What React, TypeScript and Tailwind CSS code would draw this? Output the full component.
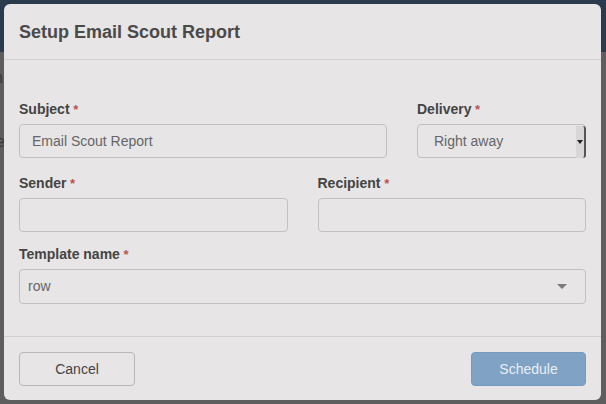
import React from "react";

const Req = () => <span className="text-[13px] text-[#b9534f]"> *</span>;

const Label = ({ children }: { children: React.ReactNode }) => (
  <label className="mb-[5px] block h-5 text-[14px] font-bold leading-5 text-[#444]">
    {children}
    <Req />
  </label>
);

const inputBox =
  "h-[34px] w-full rounded-[4px] border border-[#c2c0c1] bg-[#e7e5e6] text-[14px] text-[#666]";

export default function App() {
  return (
    <div
      className="relative h-[404px] w-[606px] overflow-hidden bg-[#5e5e5e]"
      style={{ fontFamily: '"Liberation Sans", Arial, sans-serif' }}
    >
      {/* dimmed page behind the dialog */}
      <div className="h-[52px] bg-[#2c3a4d]" />
      <div className="flex flex-col gap-[40px] pl-0 pt-[14px] text-[16px] text-[#3a3a3a]">
        <span className="-ml-[6px]">n</span>
        <span className="-ml-[4px]">e</span>
      </div>

      {/* dialog */}
      <div className="absolute left-[4px] top-[4px] flex h-[396px] w-[597px] flex-col rounded-[6px] bg-[#e7e5e6]">
        <div className="flex h-[56px] items-center border-b border-[#d2d0d1] px-[15px] pt-[2px]">
          <h4 className="text-[18px] font-bold text-[#4a4a4a]">
            Setup Email Scout Report
          </h4>
        </div>

        <div className="flex-1 px-[15px] pt-[39px]">
          <div className="flex gap-[30px]">
            <div className="w-[368px]">
              <Label>Subject</Label>
              <div className={`${inputBox} flex items-center px-[12px]`}>
                Email Scout Report
              </div>
            </div>
            <div className="flex-1">
              <Label>Delivery</Label>
              <div className={`${inputBox} relative flex items-center px-[16px]`}>
                Right away
                <div className="absolute right-[-1px] top-[1px] flex h-[32px] w-[10px] items-center justify-center rounded-r-[3px] border-r-[2px] border-[#555] bg-[#d8d6d7]">
                  <div className="h-0 w-0 border-x-[3px] border-t-[4px] border-x-transparent border-t-[#222]" />
                </div>
              </div>
            </div>
          </div>

          <div className="mt-[15px] flex gap-[30px]">
            <div className="flex-1">
              <Label>Sender</Label>
              <div className={inputBox} />
            </div>
            <div className="flex-1">
              <Label>Recipient</Label>
              <div className={inputBox} />
            </div>
          </div>

          <div className="mt-[12px]">
            <Label>Template name</Label>
            <div className={`${inputBox} flex h-[35px] items-center justify-between pl-[8px] pr-[18px] text-[#444]`}>
              row
              <div className="h-0 w-0 border-x-[5px] border-t-[5px] border-x-transparent border-t-[#7a7a7a]" />
            </div>
          </div>
        </div>

        <div className="flex h-[64px] items-start justify-between border-t border-[#d2d0d1] px-[15px] pt-[15px]">
          <button className="h-[34px] w-[116px] rounded-[4px] border border-[#b8b6b7] text-[14px] text-[#444]">
            Cancel
          </button>
          <button className="h-[34px] w-[115px] rounded-[4px] border border-[#759bbf] bg-[#7fa2c5] text-[14px] text-[#e9eef4]">
            Schedule
          </button>
        </div>
      </div>
    </div>
  );
}
